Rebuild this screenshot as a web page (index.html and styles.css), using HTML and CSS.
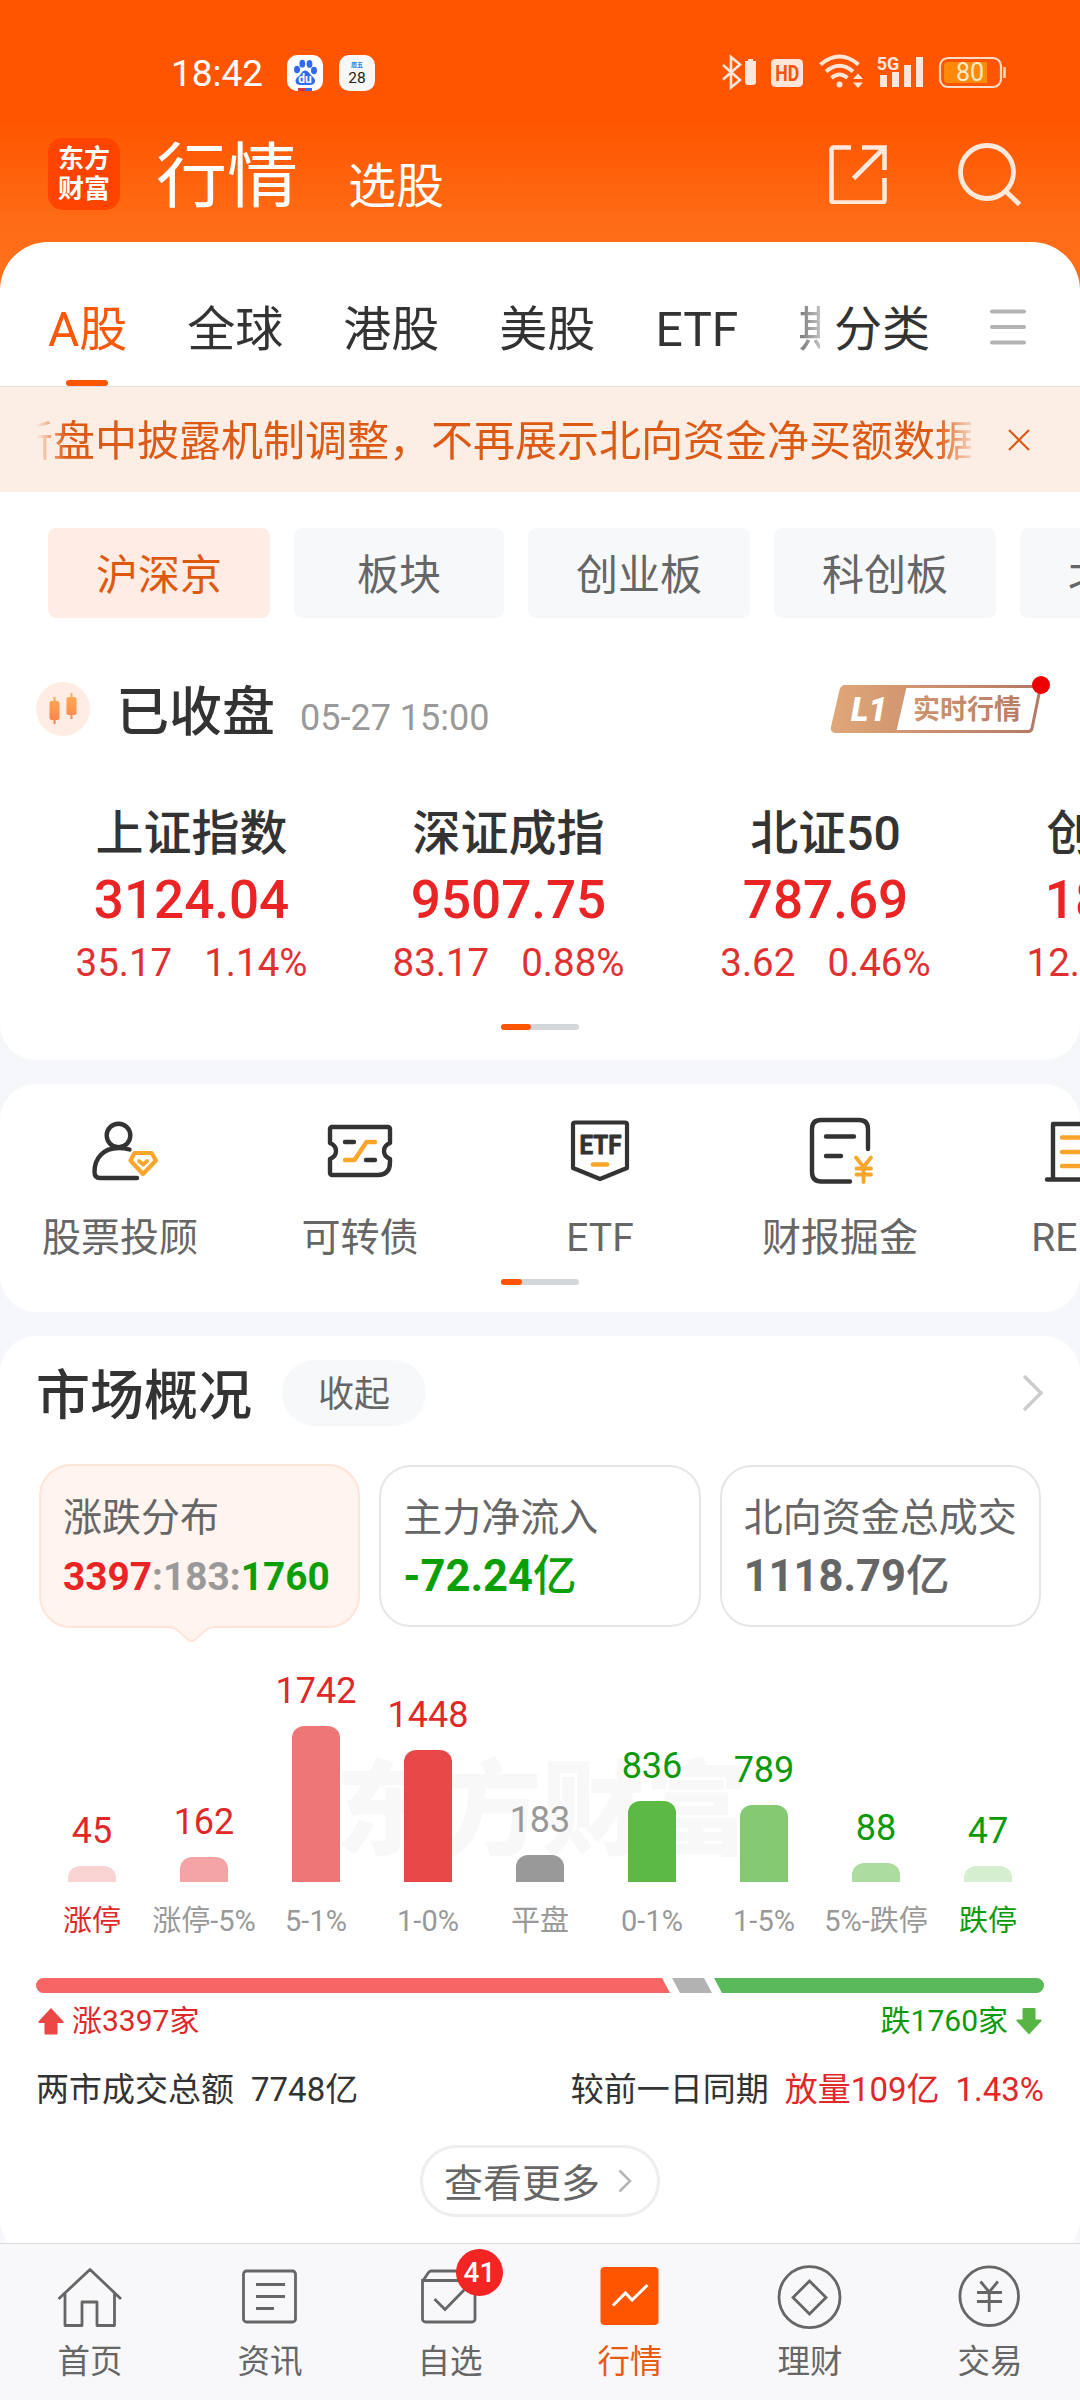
FILE: index.html
```html
<!DOCTYPE html>
<html lang="zh-CN">
<head>
<meta charset="utf-8">
<title>行情</title>
<link rel="stylesheet" href="styles.css">
</head>
<body>
<div class="app">
<main class="content">
  <div class="status">
    <span class="time">18:42</span>
    <svg class="app-icon" width="36" height="36" viewBox="0 0 36 36">
      <rect width="36" height="36" rx="10" fill="#fff"/>
      <g fill="#2f6bf0"><ellipse cx="10" cy="14.500" rx="3" ry="3.800"/><ellipse cx="15.300" cy="8.700" rx="2.900" ry="3.900"/><ellipse cx="22.500" cy="8.900" rx="2.900" ry="3.900"/><ellipse cx="27" cy="15.500" rx="3" ry="3.700"/><path d="M18 15.500c3 0 4.500 3 6.500 5s4 3.500 3.500 6-2.500 3.500-5 3.500h-9.500c-3 0-5-1.500-5-4s2-3.500 4-5.500 3-5 5.500-5z"/></g>
      <text x="18" y="28" class="du">du</text>
      <path d="M11 33h7v3h-7z" fill="#d9363e"/><path d="M18 33h7v3h-7z" fill="#3b6fe8"/>
    </svg>
    <svg class="app-icon cal" width="36" height="36" viewBox="0 0 36 36">
      <rect width="36" height="36" rx="10" fill="#f7f7f7"/>
      <text x="18" y="12" class="cal-week">周五</text>
      <text x="18" y="27.500" class="cal-day">28</text>
    </svg>
    <svg class="indicators" width="290" height="42" viewBox="720 52 290 42">
      <path d="M723 65l17 15-9 7.500V57l9 7.500-17 15" fill="none" stroke="#ffe6d9" stroke-width="2.600"/>
      <path d="M748 59h5v2h3v21a3 3 0 0 1-3 3h-5a3 3 0 0 1-3-3V61h3z" fill="#ffe6d9"/>
      <rect x="771" y="59" width="32" height="28" rx="4.500" fill="#ffe6d9"/>
      <text x="787.200" y="81" class="hd" textLength="24" lengthAdjust="spacingAndGlyphs">HD</text>
      <g fill="none" stroke="#ffe6d9" stroke-width="4"><path d="M820.500 64.500q19-16 38 0"/><path d="M826 71.500q13.500-11.500 27 0"/><path d="M831.500 78q8-7 16 0"/></g>
      <circle cx="839.500" cy="84.500" r="3" fill="#ffe6d9"/>
      <path d="M853 79l5-5.500 5 5.500zM853 82.500h10l-5 5.500z" fill="#ffe6d9"/>
      <path d="M880 75h7v12h-7zM892 72h7v15h-7zM904 65h7v22h-7zM916 57h7v30h-7z" fill="#ffe6d9"/>
      <text x="888" y="70" class="g5">5G</text>
      <rect x="940" y="58" width="61" height="29" rx="8" fill="none" stroke="#ffdcc8" stroke-width="2.200"/>
      <path d="M948 62h39v21h-39q-4 0-4-4v-13q0-4 4-4z" fill="#ff8a0a"/>
      <path d="M1004.500 67v11" stroke="#ffdcc8" stroke-width="2.400"/>
      <text x="970" y="81" class="batt">80</text>
    </svg>
  </div>

  <header class="header">
    <div class="logo">东方<br>财富</div>
    <h1>行情</h1>
    <span class="pick">选股</span>
    <svg class="share" width="60" height="60" viewBox="828 144 60 60" fill="none" stroke="#ffe9dc" stroke-width="4.600">
      <path d="M851 147.500h-17.500a2 2 0 0 0-2 2v51a2 2 0 0 0 2 2h49a2 2 0 0 0 2-2V178M862 147.500h22.500V170M883.500 148.500L853.500 178.500"/>
    </svg>
    <svg class="search" width="66" height="66" viewBox="956 140 66 66" fill="none" stroke="#ffe9dc" stroke-width="4.800">
      <circle cx="987" cy="171" r="26.500"/><path d="M1005.500 190l14 13.500"/>
    </svg>
  </header>

  <section class="sheet">
    <nav class="tabs">
      <div class="tab-scroll">
        <span class="tab active">A股</span><span class="tab">全球</span><span class="tab">港股</span><span class="tab">美股</span><span class="tab">ETF</span><span class="tab">期</span>
      </div>
      <span class="tab all">分类</span>
      <svg width="36" height="36" viewBox="0 0 36 36" stroke="#b3b3b3" stroke-width="4" stroke-linecap="round"><path d="M2 2.500h32M2 18h32M2 33.500h32"/></svg>
    </nav>

    <div class="notice">
      <div class="marquee"><span>所盘中披露机制调整，不再展示北向资金净买额数据</span></div>
      <svg width="22" height="22" viewBox="0 0 22 22" stroke="#dc5a14" stroke-width="2.200"><path d="M1 1l20 20M21 1L1 21"/></svg>
    </div>

    <div class="chips">
      <span class="chip on">沪深京</span><span class="chip short">板块</span><span class="chip">创业板</span><span class="chip">科创板</span><span class="chip">北交所</span>
    </div>

    <div class="session">
      <svg width="54" height="54" viewBox="0 0 54 54">
        <defs><linearGradient id="candle" x1="0" y1="1" x2="0" y2="0"><stop offset="0" stop-color="#fb7f45"/><stop offset="1" stop-color="#fdb05a"/></linearGradient></defs>
        <circle cx="27" cy="27" r="27" fill="#ffece2"/>
        <path d="M17.500 15h2v4h2a2 2 0 0 1 2 2v15a2 2 0 0 1-2 2h-2v4h-2v-4h-2a2 2 0 0 1-2-2V21a2 2 0 0 1 2-2h2zM34.500 11h2v4h2a2 2 0 0 1 2 2v14a2 2 0 0 1-2 2h-2v4h-2v-4h-2a2 2 0 0 1-2-2V17a2 2 0 0 1 2-2h2z" fill="url(#candle)"/>
      </svg>
      <h2>已收盘</h2>
      <time>05-27 15:00</time>
      <svg class="l1" width="222" height="60" viewBox="830 675 222 60">
        <defs><linearGradient id="bronze" gradientUnits="userSpaceOnUse" x1="831" y1="700" x2="1044" y2="715"><stop offset="0" stop-color="#e0a878"/><stop offset="1" stop-color="#b37764"/></linearGradient></defs>
        <path d="M846 686.500h194.500l-8.500 42q-.8 3-4 3H836q-4.500 0-3.500-4.500l8.500-37q1-3.500 5-3.500z" fill="#fff" stroke="url(#bronze)" stroke-width="3"/>
        <path d="M845 685h62l-11 48h-59q-6 0-5-5l9-38q1-5 4-5z" fill="url(#bronze)"/>
        <text x="851" y="721" class="l1-mark" textLength="36" lengthAdjust="spacingAndGlyphs">L1</text>
        <text x="913" y="719" class="l1-text" fill="url(#bronze)">实时行情</text>
        <circle cx="1041" cy="685" r="9" fill="#ee0000"/>
      </svg>
    </div>

    <div class="indices">
      <div class="index"><b>上证指数</b><strong>3124.04</strong><p><span>35.17</span><span>1.14%</span></p></div>
      <div class="index"><b>深证成指</b><strong>9507.75</strong><p><span>83.17</span><span>0.88%</span></p></div>
      <div class="index"><b>北证50</b><strong>787.69</strong><p><span>3.62</span><span>0.46%</span></p></div>
      <div class="index"><b>创业板指</b><strong>1831.08</strong><p><span>12.67</span><span>0.70%</span></p></div>
    </div>
    <div class="pager"><i></i></div>
  </section>

  <section class="card tools">
    <div class="tool-row">
      <div class="tool">
        <svg width="80" height="80" viewBox="80 1110 80 80" fill="none" stroke="#333" stroke-width="4.400" stroke-linecap="round" stroke-linejoin="round">
          <circle cx="118.500" cy="1135.500" r="11.800"/><path d="M129.500 1149.500q-5-1.500-11-1.500c-15 0-24 10-24 24q0 6 5.500 6h37"/>
          <path d="M134.500 1153h17l4.500 7.500-13 13.500-12.500-13.500z" stroke="#faa62d" stroke-width="4.200"/><path d="M139 1161l4.200 3.500 4-3.500" stroke="#faa62d" stroke-width="3.800"/>
        </svg><span>股票投顾</span></div>
      <div class="tool">
        <svg width="80" height="80" viewBox="320 1110 80 80" fill="none" stroke="#333" stroke-width="4.400" stroke-linecap="round" stroke-linejoin="round">
          <path d="M332 1127h56a2 2 0 0 1 2 2v14q-6 2.500-6 8t6 8v3q0 13-12 13h-46a2 2 0 0 1-2-2v-14q6-2.500 6-8t-6-8v-14a2 2 0 0 1 2-2zM345 1142h9M366 1160h9"/>
          <path d="M345 1160h9.500l12-18h8.500" stroke="#faa62d"/>
        </svg><span>可转债</span></div>
      <div class="tool">
        <svg width="80" height="80" viewBox="560 1110 80 80" fill="none" stroke="#333" stroke-width="4.200" stroke-linecap="round" stroke-linejoin="round">
          <path d="M575 1122.500h50a2 2 0 0 1 2 2v43.500l-27 11-27-11v-43.500a2 2 0 0 1 2-2z"/>
          <path d="M593 1164.500h14" stroke="#faa62d" stroke-width="4.600"/>
          <text x="600.500" y="1154" class="etf-mark" textLength="42" lengthAdjust="spacingAndGlyphs">ETF</text>
        </svg><span>ETF</span></div>
      <div class="tool">
        <svg width="80" height="80" viewBox="800 1110 80 80" fill="none" stroke="#333" stroke-width="4.400" stroke-linecap="round" stroke-linejoin="round">
          <path d="M868 1149v-20q0-9-9-9h-38q-9 0-9 9v43q0 9.500 9 9.500h29M826 1136.500h28M826 1156h15"/>
          <path d="M856 1157.500l7.500 9.500 7.500-9.500M863.500 1167v15M856.500 1168.500h14.500M856.500 1174.500h14.500" stroke="#faa62d" stroke-width="3.800"/>
        </svg><span>财报掘金</span></div>
      <div class="tool">
        <svg width="80" height="80" viewBox="1040 1110 80 80" fill="none" stroke="#333" stroke-width="4.400" stroke-linecap="round" stroke-linejoin="round">
          <path d="M1053 1178v-54h46v54M1047 1179.500h60"/><path d="M1062 1137.500h28M1062 1152h28M1062 1166h28" stroke="#faa62d"/>
        </svg><span>REITs</span></div>
    </div>
    <div class="pager second"><i></i></div>
  </section>

  <section class="card market">
    <div class="market-head">
      <h2>市场概况</h2><span class="fold">收起</span>
      <svg width="22" height="38" viewBox="0 0 22 38" fill="none" stroke="#ccc" stroke-width="3.400"><path d="M2 2l17 17L2 36"/></svg>
    </div>
    <div class="stats">
      <div class="stat selected"><span>涨跌分布</span><strong class="ratio"><em class="up">3397</em><em class="flat">:183:</em><em class="down">1760</em></strong>
        <svg class="tail" width="42" height="17" viewBox="0 0 42 17"><path d="M1 0v1.500q3 .5 5 2.500l11 10q3 2.500 6 0l11-10q3-2.500 7-2.500V0z" fill="#fff4ef"/><path d="M0 1.500q4 .5 6 2.500l11.500 10q3 2.500 6 0L35 4q2-2 6-2.500" fill="none" stroke="#ffe4d8" stroke-width="1.800"/></svg>
      </div>
      <div class="stat"><span>主力净流入</span><strong class="down">-72.24<small>亿</small></strong></div>
      <div class="stat"><span>北向资金总成交</span><strong>1118.79<small>亿</small></strong></div>
    </div>

    <div class="chart">
      <div class="watermark">东方财富</div>
      <div class="col up"><b>45</b><i class="r1" style="height:16px"></i><span class="up">涨停</span></div>
      <div class="col up"><b>162</b><i class="r2" style="height:25px"></i><span>涨停-5%</span></div>
      <div class="col up"><b>1742</b><i class="r3" style="height:156px"></i><span>5-1%</span></div>
      <div class="col up"><b>1448</b><i class="r4" style="height:132px"></i><span>1-0%</span></div>
      <div class="col flat"><b>183</b><i class="n" style="height:27px"></i><span>平盘</span></div>
      <div class="col down"><b>836</b><i class="g4" style="height:81px"></i><span>0-1%</span></div>
      <div class="col down"><b>789</b><i class="g3" style="height:77px"></i><span>1-5%</span></div>
      <div class="col down"><b>88</b><i class="g2" style="height:19px"></i><span>5%-跌停</span></div>
      <div class="col down"><b>47</b><i class="g1" style="height:16px"></i><span class="down">跌停</span></div>
    </div>

    <svg class="split" width="1008" height="15" viewBox="0 0 1008 15">
      <path d="M7.500 0H626l8 15H7.500a7.500 7.500 0 0 1 0-15z" fill="#f86565"/><path d="M636 0h32l8 15h-32z" fill="#b2b2b2"/><path d="M678 0h322.500a7.500 7.500 0 0 1 0 15H686z" fill="#5aba5b"/>
    </svg>
    <div class="sides">
      <span class="up"><svg width="26" height="27" viewBox="0 0 26 27"><path d="M13 0l12.500 13.500q.5 1.500-1 1.500H19.500v10.500q0 1-1 1h-11q-1 0-1-1V15H1.500q-1.500 0-1-1.500z" fill="#ea4745"/></svg>涨3397家</span>
      <span class="down">跌1760家<svg width="26" height="27" viewBox="0 0 26 27"><path d="M13 26.500L.5 13q-.5-1.500 1-1.500H6.500V1q0-1 1-1h11q1 0 1 1v10.500h5q1.500 0 1 1.500z" fill="#56b543"/></svg></span>
    </div>
    <div class="turnover">
      <span>两市成交总额</span><span>7748亿</span><span class="push">较前一日同期</span><span class="up">放量109亿</span><span class="up">1.43%</span>
    </div>
    <div class="more"><span>查看更多</span><svg width="14" height="24" viewBox="0 0 14 24" fill="none" stroke="#b5b5b5" stroke-width="2.500"><path d="M1.500 1.500L12 12 1.500 22.500"/></svg></div>
  </section>
</main>

<nav class="bottom">
  <div class="item"><svg width="80" height="72" viewBox="50 2260 80 72" fill="none" stroke="#666" stroke-width="2.800">
    <path d="M58.500 2299L90 2269.500 121 2299M65 2293v32.500h17V2302h15v23.500h17.500V2293" stroke-linejoin="round"/></svg><span>首页</span></div>
  <div class="item"><svg width="80" height="72" viewBox="230 2260 80 72" fill="none" stroke="#666" stroke-width="2.800">
    <rect x="243.500" y="2271" width="52" height="51" rx="3"/><path d="M256 2284.500h29M256 2296.500h29M256 2308.500h18"/></svg><span>资讯</span></div>
  <div class="item"><svg width="80" height="72" viewBox="410 2260 80 72" fill="none" stroke="#666" stroke-width="2.800">
    <path d="M423 2280.500l5.500-8q1-1.500 3-1.500h37l6.500 9.500v38.500a3 3 0 0 1-3 3h-46.500a3 3 0 0 1-3-3v-38.500zM423 2280.500h52M434.500 2299l10.500 10.500 20-20.500"/></svg><em class="badge">41</em><span>自选</span></div>
  <div class="item on"><svg width="80" height="72" viewBox="590 2260 80 72" fill="none">
    <rect x="600.500" y="2267" width="58" height="58" rx="4" fill="#ff5500"/><path d="M613 2305.500l12.500-12.500 6.500 7 15.500-15" stroke="#fff" stroke-width="3"/></svg><span>行情</span></div>
  <div class="item"><svg width="80" height="72" viewBox="770 2260 80 72" fill="none" stroke="#666" stroke-width="2.800">
    <circle cx="809.500" cy="2297.200" r="30.500"/><path d="M809.500 2281l16.500 16.500-16.500 16.500-16.500-16.500z"/></svg><span>理财</span></div>
  <div class="item"><svg width="80" height="72" viewBox="950 2260 80 72" fill="none" stroke="#666" stroke-width="2.800">
    <circle cx="989.200" cy="2296.200" r="29.300"/><path d="M980.500 2281.500l8.700 10.500 8.700-10.500M989.200 2292v20M977 2292.500h25M977 2301.500h25"/></svg><span>交易</span></div>
</nav>
</div>
</body>
</html>
```

FILE: styles.css
```css
* { box-sizing: border-box; margin: 0; padding: 0; }
body { font-family: Roboto, "Noto Sans CJK SC", sans-serif; color: #333; }
svg { display: block; flex: none; }
em, i { font-style: normal; }
h1, h2 { font-weight: 400; }

.app {
  width: 1080px; height: 2400px; overflow: hidden;
  display: flex; flex-direction: column;
  background: linear-gradient(#ff5500 0, #ff5500 120px, #ff6b15 220px, #ff711d 300px) 0 0 / 100% 300px no-repeat, #f6f7fa;
}
.content { height: 2243px; overflow: hidden; flex: none; }
.up { color: #e02828; }
.down { color: #0a9a0a; }
.flat { color: #999; }

/* status bar */
.status { height: 110px; padding: 36px 70px 0 171px; display: flex; align-items: center; color: #fff; }
.time { width: 92px; font-size: 37px; white-space: nowrap; margin-right: 24px; }
.cal { margin-left: 16px; }
.indicators { margin-left: auto; }
.status text { text-anchor: middle; }
.du { font: 700 12px Roboto, sans-serif; fill: #fff; }
.cal-week { font: 700 6px "Noto Sans CJK SC", sans-serif; fill: #1a7fe8; }
.cal-day { font: 400 15.500px Roboto, sans-serif; fill: #222; }
.hd { font: 700 22px Roboto, sans-serif; fill: #f25511; }
.g5 { font: 700 18px Roboto, sans-serif; fill: #ffe6d9; }
.batt { font: 400 25px Roboto, sans-serif; fill: #ffecc8; }

/* page header */
.header { height: 132px; padding: 0 58px 4px 48px; display: flex; align-items: center; color: #fff; }
.logo { width: 72px; height: 72px; border-radius: 15px; background: #ff4300; font-weight: 700; font-size: 26px; line-height: 30px; text-align: center; padding-top: 6px; }
.header h1 { font-size: 71px; line-height: 80px; margin: 6px 0 0 36px; }
.pick { font-size: 48px; line-height: 56px; margin: 25px 0 0 50px; }
.share { margin-left: auto; }
.search { margin-left: 68px; }

/* main sheet */
.sheet { height: 818px; background: #fff; border-radius: 48px 48px 36px 36px; }
.tabs { height: 145px; padding: 31px 54px 0 0; display: flex; align-items: center; font-size: 48px; border-bottom: 1px solid #e0e0e0; }
.tab-scroll { width: 820px; height: 113px; padding-left: 48px; display: flex; align-items: center; gap: 60px; overflow: hidden; -webkit-mask-image: linear-gradient(90deg, #000 780px, rgba(0,0,0,.3) 820px); mask-image: linear-gradient(90deg, #000 780px, rgba(0,0,0,.3) 820px); }
.tab { flex: none; line-height: 111px; }
.tab.active { color: #fa5706; position: relative; line-height: 113px; }
.tab.active::after { content: ""; position: absolute; left: 18px; bottom: 0; width: 42px; height: 6px; border-radius: 3px; background: #ff5500; }
.all { margin-left: 14px; }
.tabs svg { margin-left: auto; margin-bottom: 6px; }

.notice { height: 105px; padding: 0 50px 0 36px; background: #fceee5; color: #dc5a14; display: flex; align-items: center; justify-content: space-between; }
.marquee { width: 935px; overflow: hidden; display: flex; font-size: 42px; line-height: 60px; padding-top: 5px; -webkit-mask-image: linear-gradient(90deg, transparent, #000 30px, #000 900px, rgba(0,0,0,.2)); mask-image: linear-gradient(90deg, transparent, #000 30px, #000 900px, rgba(0,0,0,.2)); }
.marquee span { flex: none; margin-left: -25px; }

.chips { padding: 36px 0 0 48px; display: flex; gap: 24px; overflow: hidden; }
.chip { flex: none; width: 222px; height: 90px; line-height: 96px; border-radius: 8px; background: #f7f8fa; color: #666; text-align: center; font-size: 42px; }
.chip.short { width: 210px; }
.chip.on { background: #ffede5; color: #de590f; }

.session { height: 100px; margin-top: 41px; padding: 0 28px 0 36px; display: flex; align-items: center; }
.session h2 { font-size: 53px; font-weight: 500; line-height: 64px; margin: 7px 0 0 26px; }
.session time { font-size: 36px; line-height: 44px; color: #999; margin: 17px 0 0 25px; }
.l1 { margin-left: auto; margin-bottom: 8px; }
.l1-mark { font: italic 900 33px Roboto, sans-serif; fill: #fff; }
.l1-text { font: 700 27px "Noto Sans CJK SC", sans-serif; }

.indices { margin-top: 44px; padding-left: 33px; display: flex; overflow: hidden; }
.index { flex: none; width: 317px; text-align: center; display: flex; flex-direction: column; }
.index b { font-size: 48px; font-weight: 500; line-height: 61px; }
.index strong { font-size: 53px; font-weight: 500; line-height: 72px; color: #ea2424; }
.index p { display: flex; justify-content: center; gap: 32px; font-size: 38.500px; line-height: 54px; color: #e23030; }
.pager { width: 78px; height: 6px; margin: 34px auto 0; border-radius: 3px; background: #d4d7da; }
.pager i { display: block; width: 30px; height: 6px; border-radius: 3px; background: #ff5500; }

/* shortcut tools */
.card { background: #fff; border-radius: 36px; margin-top: 24px; }
.tools { height: 228px; padding-top: 26px; overflow: hidden; }
.tool-row { display: flex; }
.tool { flex: none; width: 240px; display: flex; flex-direction: column; align-items: center; gap: 24px; font-size: 39px; line-height: 48px; color: #666; }
.etf-mark { font: 700 25px Roboto, sans-serif; fill: #333; stroke: #333; stroke-width: .8px; text-anchor: middle; }
.pager.second { margin-top: 17px; }
.second i { width: 21px; }

/* market overview */
.market { height: 920px; }
.market-head { height: 116px; padding: 0 36px; display: flex; align-items: center; }
.market-head h2 { font-size: 54px; font-weight: 500; line-height: 64px; margin-top: 6px; }
.market-head svg { margin-left: auto; margin-bottom: 2px; }
.fold { width: 144px; height: 66px; line-height: 71px; margin: 0 0 2px 30px; border-radius: 33px; background: #f7f8fa; color: #666; font-size: 36px; text-align: center; }
.stats { margin-top: 12px; padding: 0 39px; display: grid; grid-template-columns: repeat(3, 1fr); gap: 19px; height: 164px; }
.stat { margin: 1px 0; border: 2px solid #e6e6e6; border-radius: 32px; padding: 26px 0 0 22px; display: flex; flex-direction: column; color: #666; white-space: nowrap; }
.stat > span { font-size: 39px; line-height: 50px; }
.stat strong { font-size: 43.500px; line-height: 60px; margin-top: 4px; }
.stat strong.down { color: #0a9f05; }
.stat small { font-size: 43.500px; font-weight: 500; }
.stat.selected { margin: 0; padding-top: 27px; position: relative; background: #fff4ef; border-color: #ffe4d8; }
.stat .ratio { font-size: 38.800px; }
.ratio .up { color: #ea2424; }
.ratio .flat { font-weight: 700; }
.ratio .down { color: #0a9f05; }
.tail { position: absolute; left: 130px; bottom: -17px; }

.chart { height: 311px; padding: 0 36px; display: flex; align-items: flex-end; position: relative; }
.watermark { position: absolute; left: 336px; top: 114px; font-size: 103px; line-height: 140px; font-weight: 900; color: #f8f8f8; }
.col { width: 112px; display: flex; flex-direction: column; align-items: center; position: relative; }
.col b { font-size: 36px; font-weight: 400; line-height: 40px; margin-bottom: 15.500px; }
.col i { width: 48px; border-radius: 12px 12px 0 0; }
.col span { margin-top: 21px; font-size: 29px; line-height: 36px; white-space: nowrap; color: #999; }
.col span.up { color: #e02828; }
.col span.down { color: #0a9a0a; }
.r1 { background: #f9d2d2; }
.r2 { background: #f4a4a4; }
.r3 { background: #ee7676; }
.r4 { background: #e94848; }
.n { background: #999; }
.g4 { background: #5cb943; }
.g3 { background: #83ca72; }
.g2 { background: #addca1; }
.g1 { background: #d6eed0; }
.split { margin: 39px 36px 0; }
.sides { margin-top: 10px; padding: 0 38px; display: flex; justify-content: space-between; font-size: 30px; line-height: 36px; }
.sides span { display: flex; align-items: center; gap: 8px; }
.turnover { margin-top: 29px; padding: 0 36px; display: flex; gap: 17px; font-size: 33px; line-height: 44px; }
.turnover .up { margin-left: -1px; }
.push { margin-left: auto; }
.more { width: 240px; height: 72px; margin: 33px auto 0; border: 3px solid #eee; border-radius: 36px; display: flex; align-items: center; justify-content: center; gap: 18px; padding-right: 4px; font-size: 39px; line-height: 62px; color: #666; }
.more span { padding-top: 5px; }

/* bottom navigation */
.bottom { height: 157px; border-top: 1px solid #ddd; background: #f8f8fa; padding-top: 16px; display: flex; }
.item { width: 180px; display: flex; flex-direction: column; align-items: center; gap: 8px; font-size: 32.500px; line-height: 44px; color: #666; position: relative; }
.item.on { color: #e85a10; }
.badge { position: absolute; left: 96px; top: -11px; width: 47px; height: 47px; border-radius: 50%; background: #f22424; color: #fff; font-size: 28px; font-weight: 500; line-height: 48px; text-align: center; }
```
